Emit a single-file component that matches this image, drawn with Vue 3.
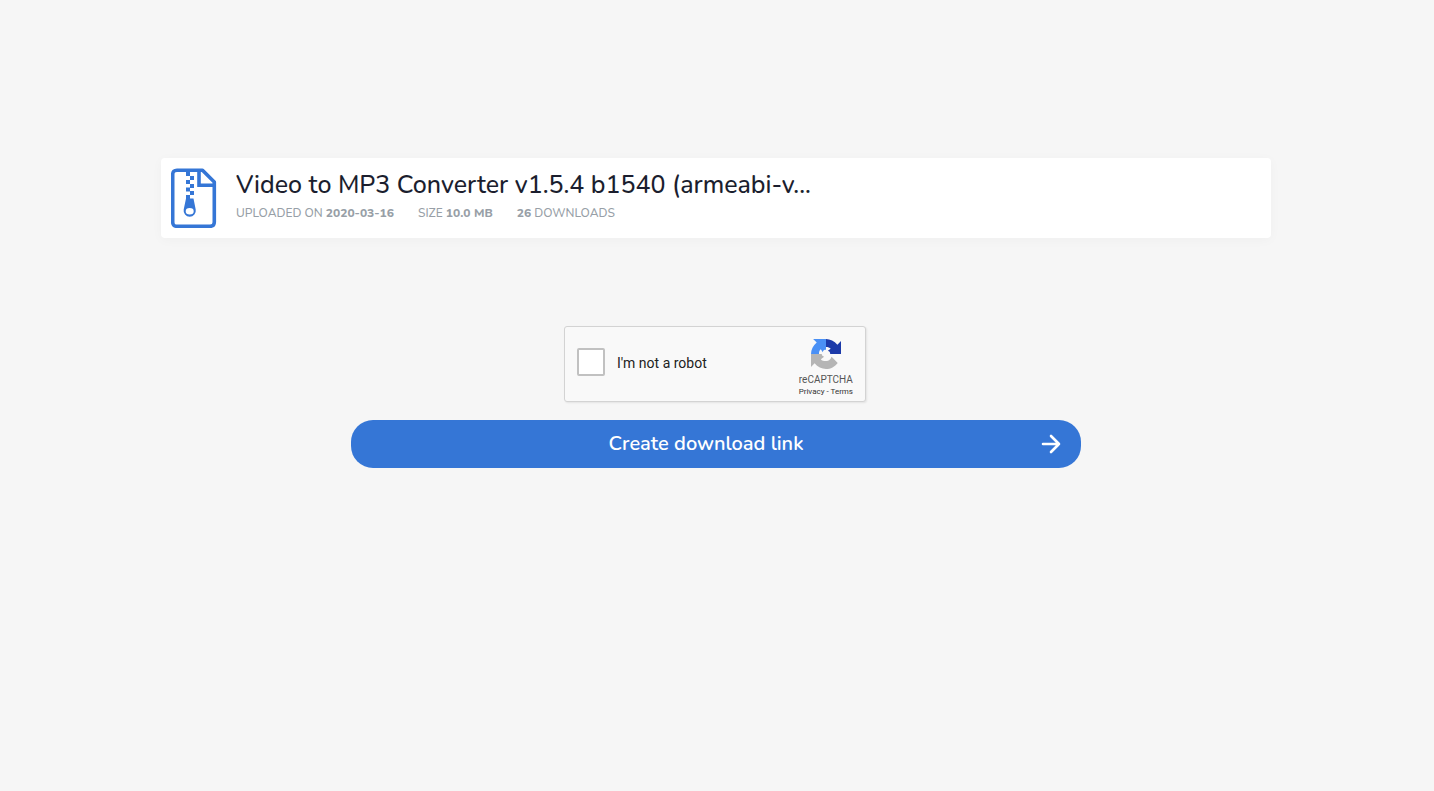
<script setup>
import { ref } from 'vue'

const title = 'Video to MP3 Converter v1.5.4 b1540 (armeabi-v...'
const verified = ref(false)
</script>

<template>
  <main class="page">
    <section class="file-card">
      <svg class="file-icon" viewBox="0 0 46 60" aria-hidden="true">
        <path d="M6 2.200H31.500L43.300 14V54Q43.300 58.300 39 58.300H6Q1.700 58.300 1.700 54V6.500Q1.700 2.200 6 2.200Z" fill="none" stroke="#3576d6" stroke-width="3.600" stroke-linejoin="round" />
        <path d="M28 2V17.300H44" fill="none" stroke="#3576d6" stroke-width="3.600" />
        <path d="M15 4h4v4h-4zM19 8h4v4h-4zM15 12h4v4h-4zM19 16h4v4h-4zM15 19.500h4v4h-4zM19 23h4v4h-4zM15 27h4v4h-4z" fill="#3576d6" />
        <path fill-rule="evenodd" d="M15 30.500H22.500L24.700 41.500A6.100 6.100 0 1 1 12.700 41.500ZM18.700 40A4 3.300 0 1 0 18.700 46.600A4 3.300 0 1 0 18.700 40Z" fill="#3576d6" />
      </svg>
      <div class="file-info">
        <h1 class="file-title">{{ title }}</h1>
        <ul class="file-meta">
          <li>UPLOADED ON <b>2020-03-16</b></li>
          <li>SIZE <b>10.0 MB</b></li>
          <li><b>26</b> DOWNLOADS</li>
        </ul>
      </div>
    </section>

    <form class="download-form" @submit.prevent>
      <div class="captcha">
        <input id="robot" v-model="verified" class="captcha-box" type="checkbox" />
        <label class="captcha-label" for="robot">I'm not a robot</label>
        <div class="captcha-brand">
          <svg class="captcha-logo" viewBox="0 0 64 64" aria-hidden="true">
            <path d="M64 32V4.500L56.300 12.200C50 4.500 40.500 0 32 0V17C36 17 40 18 42 21L36 25C39 26 41 28 41 32Z" fill="#1c3aa9" />
            <path d="M32 0H4.500L12.200 7.700C4.500 14 0 23 0 32H17C17 28 18 24 21 22L25 28C26 24 28 23 32 23Z" fill="#4a90f5" />
            <path d="M0 32V59.500L7.700 51.800C14 59.500 23 64 32 64C42 64 51 59 57 51L44 38C41 45 37 47.500 32 47C27 47 23 46 21 43L28 38C25 37 23 35 23 32Z" fill="#b5b5b5" />
          </svg>
          <span class="captcha-name">reCAPTCHA</span>
          <span class="captcha-links"><a href="#privacy">Privacy</a> - <a href="#terms">Terms</a></span>
        </div>
      </div>

      <button class="create-button" type="submit">
        <span class="create-text">Create download link</span>
        <svg class="create-arrow" viewBox="0 0 20 20" aria-hidden="true">
          <path d="M2 10H18M10 2L18 10L10 18" fill="none" stroke="#fff" stroke-width="2.600" stroke-linecap="round" stroke-linejoin="round" />
        </svg>
      </button>
    </form>
  </main>
</template>

<style>
body {
  margin: 0;
  background: #f6f6f6;
}
</style>

<style scoped>
.page {
  box-sizing: border-box;
  min-height: 100vh;
  padding: 158px 18px 32px 16px;
  font-family: Nunito, "Open Sans", sans-serif;
}

.file-card {
  box-sizing: border-box;
  display: flex;
  max-width: 1110px;
  min-height: 80px;
  margin: 0 auto;
  padding: 10px;
  border-radius: 4px;
  background: #fff;
  box-shadow: 0 2px 12px rgba(0, 0, 0, 0.03);
}

.file-icon {
  flex: none;
  width: 46px;
  height: 60px;
}

.file-info {
  min-width: 0;
  margin-left: 19px;
}

.file-title {
  margin: 0;
  overflow: hidden;
  color: #1b1e2e;
  font-size: 25px;
  font-weight: 500;
  line-height: 34px;
  text-overflow: ellipsis;
  white-space: nowrap;
}

.file-meta {
  display: flex;
  flex-wrap: wrap;
  gap: 0 24px;
  margin: 2px 0 0;
  padding: 0;
  color: #989fa7;
  font-size: 12px;
  font-weight: 500;
  line-height: 18px;
  list-style: none;
}

.file-meta b {
  font-weight: 800;
}

.download-form {
  display: flex;
  flex-direction: column;
  align-items: center;
  gap: 16px;
  max-width: 730px;
  margin: 88px auto 0;
}

.captcha {
  box-sizing: border-box;
  display: flex;
  align-items: center;
  width: 302px;
  height: 76px;
  margin: 0 2px 2px 0;
  padding: 0 12px;
  border: 1px solid #d3d3d3;
  border-radius: 3px;
  background: #f9f9f9;
  box-shadow: 1px 1px 2px rgba(0, 0, 0, 0.08);
  font-family: Roboto, sans-serif;
}

.captcha-box {
  flex: none;
  box-sizing: border-box;
  width: 28px;
  height: 28px;
  margin: 0 12px 4px 0;
  border: 2px solid #c1c1c1;
  border-radius: 2px;
  background: #fff;
  appearance: none;
}

.captcha-box:checked {
  background: #4285f4;
}

.captcha-label {
  flex: 1;
  padding-bottom: 2px;
  color: #222;
  font-size: 14px;
  line-height: 18px;
}

.captcha-brand {
  display: flex;
  flex-direction: column;
  align-items: center;
  padding-top: 8px;
  color: #555;
}

.captcha-logo {
  width: 30px;
  height: 30px;
}

.captcha-name {
  margin-top: 4px;
  font-size: 10px;
  line-height: 14px;
}

.captcha-links {
  color: #333;
  font-size: 8px;
  line-height: 10px;
}

.captcha-links a {
  color: inherit;
  text-decoration: none;
}

.create-button {
  display: flex;
  align-items: center;
  width: 100%;
  height: 48px;
  padding: 0 20px;
  border: 0;
  border-radius: 22px;
  background: #3576d6;
  color: #fff;
  font: inherit;
  font-size: 20px;
  font-weight: 600;
  line-height: 28px;
  cursor: pointer;
}

.create-text {
  flex: 1;
}

.create-arrow {
  flex: none;
  width: 20px;
  height: 20px;
}
</style>
